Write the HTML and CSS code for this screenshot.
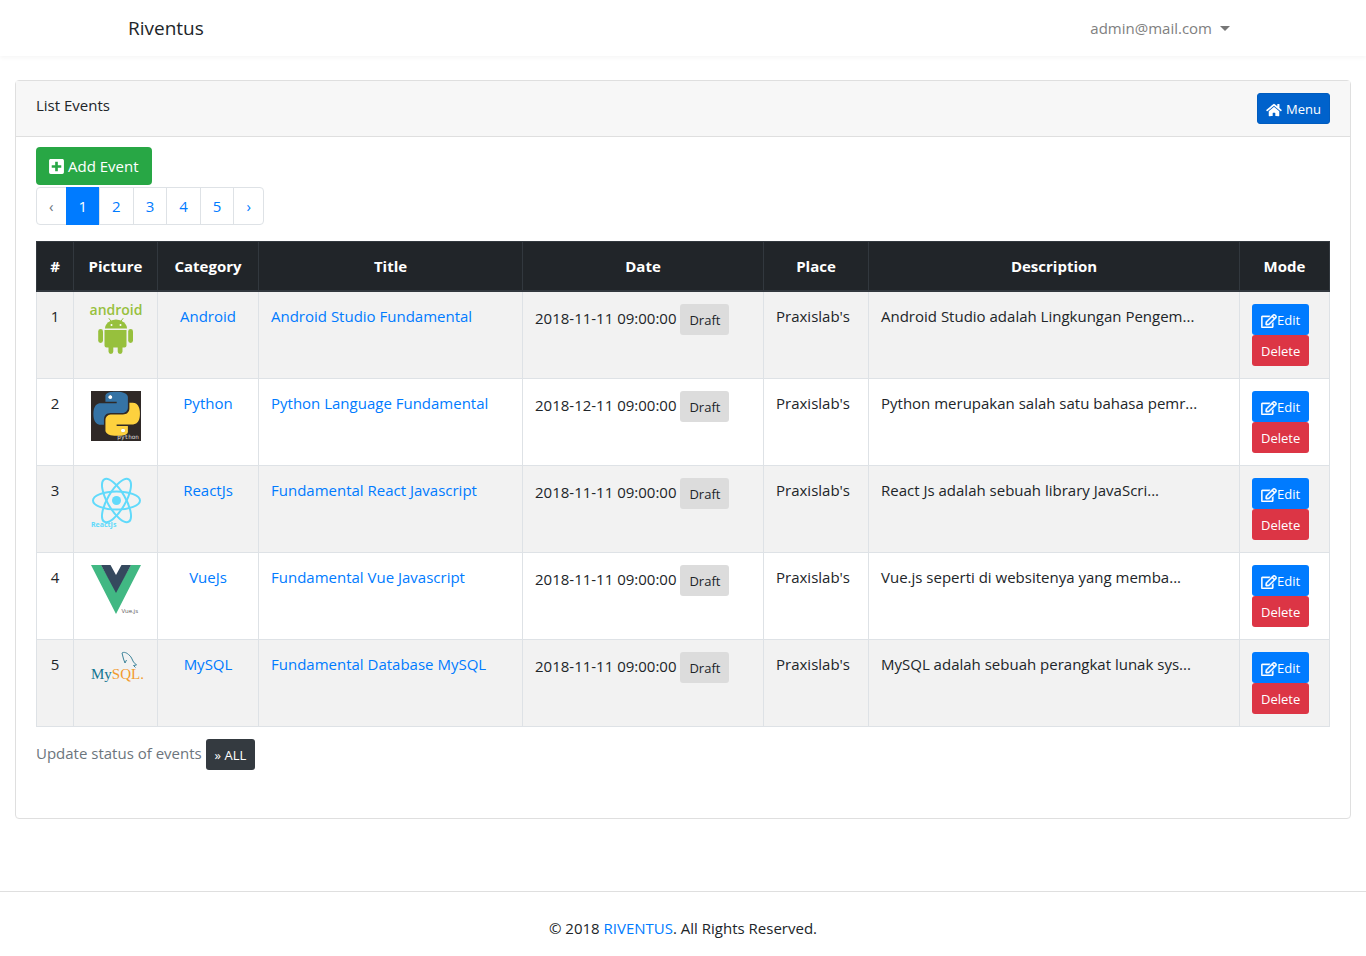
FILE: index.html
```html
<!DOCTYPE html>
<html lang="en">
<head>
<meta charset="utf-8">
<title>Riventus</title>
<link rel="stylesheet" href="styles.css">
</head>
<body>
<svg class="sprite" aria-hidden="true">
  <symbol id="home" viewBox="0 0 576 512"><path d="M280.37 148.26L96 300.11V464a16 16 0 0 0 16 16l112.06-.29a16 16 0 0 0 15.92-16V368a16 16 0 0 1 16-16h64a16 16 0 0 1 16 16v95.64a16 16 0 0 0 16 16.05L464 480a16 16 0 0 0 16-16V300L295.67 148.26a12.19 12.19 0 0 0-15.3 0zM571.6 251.47L488 182.56V44.05a12 12 0 0 0-12-12h-56a12 12 0 0 0-12 12v72.61L318.47 43a48 48 0 0 0-61 0L4.34 251.47a12 12 0 0 0-1.6 16.9l25.5 31A12 12 0 0 0 45.15 301l235.22-193.74a12.19 12.19 0 0 1 15.3 0L530.9 301a12 12 0 0 0 16.9-1.6l25.5-31a12 12 0 0 0-1.7-16.93z"/></symbol>
  <symbol id="plus" viewBox="0 0 448 512"><path d="M400 32H48C21.5 32 0 53.5 0 80v352c0 26.5 21.5 48 48 48h352c26.5 0 48-21.5 48-48V80c0-26.5-21.5-48-48-48zm-32 252c0 6.600-5.400 12-12 12h-92v92c0 6.600-5.400 12-12 12h-56c-6.600 0-12-5.400-12-12v-92H92c-6.600 0-12-5.400-12-12v-56c0-6.600 5.400-12 12-12h92v-92c0-6.600 5.400-12 12-12h56c6.600 0 12 5.400 12 12v92h92c6.600 0 12 5.400 12 12v56z"/></symbol>
  <symbol id="edit" viewBox="0 0 576 512"><path stroke="currentColor" stroke-width="14" d="M402.300 344.900l32-32c5-5 13.700-1.500 13.700 5.700V464c0 26.500-21.500 48-48 48H48c-26.500 0-48-21.500-48-48V112c0-26.500 21.500-48 48-48h273.500c7.100 0 10.700 8.600 5.700 13.700l-32 32c-1.500 1.500-3.500 2.300-5.700 2.300H48v352h352V350.500c0-2.100.8-4.100 2.300-5.600zm156.600-201.800L296.300 405.700l-90.400 10c-26.200 2.900-48.500-19.200-45.600-45.600l10-90.400L432.900 17.100c22.900-22.900 59.900-22.900 82.700 0l43.200 43.200c22.900 22.900 22.900 60 .1 82.800zM460.100 174L402 115.900 216.200 301.800l-7.300 65.300 65.300-7.300L460.100 174zm64.800-79.700l-43.200-43.200c-4.100-4.100-10.800-4.100-14.800 0L436 82l58.100 58.100 30.900-30.900c4-4.200 4-10.800-.1-14.900z"/></symbol>
</svg>

<nav class="navbar">
  <div class="container">
    <a class="brand" href="#">Riventus</a>
    <button class="account" type="button">admin@mail.com <span class="caret"></span></button>
  </div>
</nav>

<main class="main">
  <section class="card">
    <header class="card-header">
      <span>List Events</span>
      <a class="btn btn-sm btn-menu" href="#"><svg class="icon icon-wide"><use href="#home"/></svg> Menu</a>
    </header>
    <div class="card-body">
      <a class="btn btn-success" href="#"><svg class="icon"><use href="#plus"/></svg> Add Event</a>
      <ul class="pagination">
        <li><span class="page disabled">‹</span></li>
        <li><a class="page active" href="#">1</a></li>
        <li><a class="page" href="#">2</a></li>
        <li><a class="page" href="#">3</a></li>
        <li><a class="page" href="#">4</a></li>
        <li><a class="page" href="#">5</a></li>
        <li><a class="page" href="#">›</a></li>
      </ul>
      <table class="events">
        <colgroup>
          <col class="col-num"><col class="col-picture"><col class="col-category"><col class="col-title"><col class="col-date"><col class="col-place"><col><col class="col-mode">
        </colgroup>
        <thead>
          <tr><th>#</th><th>Picture</th><th>Category</th><th>Title</th><th>Date</th><th>Place</th><th>Description</th><th>Mode</th></tr>
        </thead>
        <tbody>
          <tr>
            <td class="center">1</td>
            <td class="center"><svg class="logo" viewBox="0 0 50 50" fill="#97c03d">
              <text class="logo-android" x="25" y="11" text-anchor="middle">android</text>
              <path d="M14 24.500a11 9 0 0 1 22 0z"/>
              <path d="M18 14.500l3 4M32 14.500l-3 4" stroke="#97c03d" stroke-linecap="round"/>
              <circle cx="20.500" cy="21" r="1" fill="#fff"/><circle cx="29.500" cy="21" r="1" fill="#fff"/>
              <path d="M13.500 26h22v15.500a2 2 0 0 1-2 2h-2v4a2.400 2.400 0 0 1-4.800 0v-4h-4.400v4a2.400 2.400 0 0 1-4.800 0v-4h-2a2 2 0 0 1-2-2z"/>
              <rect x="7.200" y="25" width="4.800" height="14" rx="2.400"/><rect x="37.200" y="25" width="4.800" height="14" rx="2.400"/>
            </svg></td>
            <td class="center"><a href="#">Android</a></td>
            <td><a href="#">Android Studio Fundamental</a></td>
            <td>2018-11-11 09:00:00 <button class="btn btn-sm btn-draft" type="button">Draft</button></td>
            <td>Praxislab's</td>
            <td>Android Studio adalah Lingkungan Pengem...</td>
            <td><div class="actions"><a class="btn btn-sm btn-primary" href="#"><svg class="icon icon-wide"><use href="#edit"/></svg>Edit</a><button class="btn btn-sm btn-danger" type="button">Delete</button></div></td>
          </tr>
          <tr>
            <td class="center">2</td>
            <td class="center"><svg class="logo" viewBox="0 0 50 50">
              <path fill="#2f2927" d="M0 0h50v50H0z"/>
              <g transform="translate(2.500 .7) scale(1.930 1.840)">
              <circle cx="8.700" cy="2.950" r="1.200" fill="#fff"/><circle cx="15.300" cy="21.100" r="1.200" fill="#fff"/>
              <path fill="#3573a5" d="M14.250.18l.9.2.73.26.59.3.45.32.34.34.25.34.16.33.1.3.04.26.02.2-.01.13V8.500l-.05.63-.13.55-.21.46-.26.38-.3.31-.33.25-.35.19-.35.14-.33.1-.3.07-.26.04-.21.02H8.770l-.69.05-.59.14-.5.22-.41.27-.33.32-.27.35-.2.36-.15.37-.1.35-.07.32-.04.27-.02.21v3.060H3.170l-.21-.03-.28-.07-.32-.12-.35-.18-.36-.26-.36-.36-.35-.46-.32-.59-.28-.73-.21-.88-.14-1.050-.05-1.230.06-1.220.16-1.040.24-.87.32-.71.36-.57.4-.44.42-.33.42-.24.4-.16.36-.1.32-.05.24-.01h.16l.06.01h8.160v-.83H6.180l-.01-2.750-.02-.37.05-.34.11-.31.17-.28.25-.26.31-.23.38-.2.44-.18.51-.15.58-.12.64-.1.71-.06.77-.04.84-.02 1.270.05zm-6.300 1.980l-.23.33-.08.41.08.41.23.34.33.22.41.09.41-.09.33-.22.23-.34.08-.41-.08-.41-.23-.33-.33-.22-.41-.09-.41.09z"/>
              <path fill="#fdd13e" d="M21.040 6.110l.28.06.32.12.35.18.36.27.36.35.35.47.32.59.28.73.21.88.14 1.040.05 1.230-.06 1.230-.16 1.040-.24.86-.32.71-.36.57-.4.45-.42.33-.42.24-.4.16-.36.09-.32.05-.24.02-.16-.01h-8.220v.82h5.840l.01 2.760.02.36-.05.34-.11.31-.17.29-.25.25-.31.24-.38.2-.44.17-.51.15-.58.13-.64.09-.71.07-.77.04-.84.01-1.270-.04-1.070-.14-.9-.2-.73-.25-.59-.3-.45-.33-.34-.34-.25-.34-.16-.33-.1-.3-.04-.25-.02-.2.01-.13v-5.340l.05-.64.13-.54.21-.46.26-.38.3-.32.33-.24.35-.2.35-.14.33-.1.3-.06.26-.04.21-.02.13-.01h5.840l.69-.05.59-.14.5-.21.41-.28.33-.32.27-.35.2-.36.15-.36.1-.35.07-.32.04-.28.02-.21V6.070h2.090l.14.01zm-6.470 14.250l-.23.33-.08.41.08.41.23.33.33.23.41.08.41-.08.33-.23.23-.33.08-.41-.08-.41-.23-.33-.33-.23-.41-.08-.41.08z"/>
              </g>
              <text class="logo-python" x="48" y="48" text-anchor="end">python</text>
            </svg></td>
            <td class="center"><a href="#">Python</a></td>
            <td><a href="#">Python Language Fundamental</a></td>
            <td>2018-12-11 09:00:00 <button class="btn btn-sm btn-draft" type="button">Draft</button></td>
            <td>Praxislab's</td>
            <td>Python merupakan salah satu bahasa pemr...</td>
            <td><div class="actions"><a class="btn btn-sm btn-primary" href="#"><svg class="icon icon-wide"><use href="#edit"/></svg>Edit</a><button class="btn btn-sm btn-danger" type="button">Delete</button></div></td>
          </tr>
          <tr>
            <td class="center">3</td>
            <td class="center"><svg class="logo" viewBox="0 0 50 50">
              <g fill="none" stroke="#61dafb" stroke-width="2">
                <ellipse cx="25.500" cy="22.500" rx="23.500" ry="9"/>
                <ellipse cx="25.500" cy="22.500" rx="24.500" ry="9" transform="rotate(60 25.500 22.500)"/>
                <ellipse cx="25.500" cy="22.500" rx="24.500" ry="9" transform="rotate(120 25.500 22.500)"/>
              </g>
              <circle cx="25.500" cy="22.500" r="4.500" fill="#61dafb"/>
              <text class="logo-react" x="0" y="49">ReactJs</text>
            </svg></td>
            <td class="center"><a href="#">ReactJs</a></td>
            <td><a href="#">Fundamental React Javascript</a></td>
            <td>2018-11-11 09:00:00 <button class="btn btn-sm btn-draft" type="button">Draft</button></td>
            <td>Praxislab's</td>
            <td>React Js adalah sebuah library JavaScri...</td>
            <td><div class="actions"><a class="btn btn-sm btn-primary" href="#"><svg class="icon icon-wide"><use href="#edit"/></svg>Edit</a><button class="btn btn-sm btn-danger" type="button">Delete</button></div></td>
          </tr>
          <tr>
            <td class="center">4</td>
            <td class="center"><svg class="logo" viewBox="0 0 50 50">
              <path fill="#41b883" d="M0 0h10l15 26L40 0h10L25 49z"/>
              <path fill="#35495e" d="M10 0h9.500L25 10l5.500-10H40L25 28z"/>
              <text class="logo-vue" x="47" y="48" text-anchor="end">Vue.js</text>
            </svg></td>
            <td class="center"><a href="#">VueJs</a></td>
            <td><a href="#">Fundamental Vue Javascript</a></td>
            <td>2018-11-11 09:00:00 <button class="btn btn-sm btn-draft" type="button">Draft</button></td>
            <td>Praxislab's</td>
            <td>Vue.js seperti di websitenya yang memba...</td>
            <td><div class="actions"><a class="btn btn-sm btn-primary" href="#"><svg class="icon icon-wide"><use href="#edit"/></svg>Edit</a><button class="btn btn-sm btn-danger" type="button">Delete</button></div></td>
          </tr>
          <tr>
            <td class="center">5</td>
            <td class="center"><svg class="logo" viewBox="0 0 50 50">
              <path fill="none" stroke="#3b8299" stroke-linejoin="round" d="M34 11l-1.500-4-1.500-6c2-1.500 5 0 6.500 1.500 3 2 3.500 5 5 7.500l3 3-3 .5 2 2M34 11l1.500-3"/>
              <text class="logo-mysql" x="0" y="27"><tspan fill="#127591">My</tspan><tspan fill="#f29a2e">SQL.</tspan></text>
            </svg></td>
            <td class="center"><a href="#">MySQL</a></td>
            <td><a href="#">Fundamental Database MySQL</a></td>
            <td>2018-11-11 09:00:00 <button class="btn btn-sm btn-draft" type="button">Draft</button></td>
            <td>Praxislab's</td>
            <td>MySQL adalah sebuah perangkat lunak sys...</td>
            <td><div class="actions"><a class="btn btn-sm btn-primary" href="#"><svg class="icon icon-wide"><use href="#edit"/></svg>Edit</a><button class="btn btn-sm btn-danger" type="button">Delete</button></div></td>
          </tr>
        </tbody>
      </table>
      <div class="status">Update status of events <button class="btn btn-sm btn-dark" type="button">» ALL</button></div>
    </div>
  </section>
</main>

<footer class="footer">© 2018 <a href="#">RIVENTUS</a>. All Rights Reserved.</footer>
</body>
</html>
```
FILE: styles.css
```css
* { box-sizing: border-box; }
body {
  margin: 0;
  background: #fff;
  color: #212529;
  font: 15px/24px "Open Sans", "Noto Sans", sans-serif;
}
a { color: #007bff; text-decoration: none; }
button { font-family: inherit; cursor: pointer; }
.sprite { display: none; }

.navbar { box-shadow: 0 2px 4px rgba(0, 0, 0, .04); }
.container {
  display: flex;
  justify-content: space-between;
  align-items: center;
  max-width: 1140px;
  height: 56px;
  margin: 0 auto;
  padding: 0 15px;
}
.brand { color: #212529; font-size: 19px; line-height: 30px; }
.account {
  display: flex;
  align-items: center;
  gap: 8px;
  padding: 8px;
  border: 0;
  background: none;
  color: #808080;
  font-size: 15px;
  line-height: 24px;
}
.caret {
  border: 5px solid transparent;
  border-top-color: #777;
  border-bottom: 0;
}

.main { padding: 24px 15px 72px; }
.card { border: 1px solid #dfdfdf; border-radius: 4px; }
.card-header {
  display: flex;
  justify-content: space-between;
  align-items: flex-start;
  padding: 12px 20px;
  border-bottom: 1px solid #dfdfdf;
  background: #f7f7f7;
}
.card-body { padding: 10px 20px 48px; }

.btn {
  display: inline-flex;
  align-items: center;
  gap: 4px;
  padding: 6px 12px;
  border: 1px solid transparent;
  border-radius: 4px;
  color: #fff;
  font-size: 15px;
  line-height: 24px;
  vertical-align: middle;
}
.btn-sm { padding: 5px 8px 3px; border-radius: 3px; font-size: 13px; line-height: 21px; }
.btn-menu { background: #0062cc; border-color: #005cbf; }
.btn-success { background: #28a745; }
.btn-primary { gap: 0; background: #007bff; }
.btn-danger { background: #dc3545; }
.btn-dark { background: #343a40; }
.btn-draft { background: #dcdcdc; color: #212529; }
.icon { width: 15px; height: 17px; fill: currentColor; overflow: visible; }
.icon-wide { width: 16px; height: 14px; }

.pagination { display: flex; margin: 2px 0 16px; padding: 0 0 0 1px; list-style: none; }
.page {
  display: block;
  margin-left: -1px;
  padding: 6px 12px;
  border: 1px solid #dee2e6;
  line-height: 24px;
}
.page.disabled { color: #6c757d; }
.page.active { background: #007bff; border-color: #007bff; color: #fff; }
.pagination li:first-child .page { border-radius: 4px 0 0 4px; }
.pagination li:last-child .page { border-radius: 0 4px 4px 0; }

.events { width: 100%; table-layout: fixed; border-collapse: collapse; }
.events th, .events td { padding: 12px; border: 1px solid #dee2e6; }
.events th {
  padding: 12px 0;
  border-color: #32383e;
  border-bottom-width: 2px;
  background: #212529;
  color: #fff;
  font-weight: 700;
}
.events td { height: 87px; vertical-align: top; }
.events tbody tr:nth-child(odd) { background: #f2f2f2; }
.events .center { padding: 12px 0; text-align: center; }
.col-num { width: 37px; }
.col-picture { width: 84px; }
.col-category { width: 101px; }
.col-title { width: 264px; }
.col-date { width: 241px; }
.col-place { width: 105px; }
.col-mode { width: 90px; }
.actions { display: flex; flex-direction: column; align-items: flex-start; }
.logo { display: block; width: 50px; height: 50px; margin: 0 auto; overflow: visible; }
.logo-android { font: 600 14px "Open Sans", sans-serif; }
.logo-python { fill: #ddd; font: 6px "DejaVu Sans Mono", monospace; }
.logo-react { fill: #61dafb; font: 700 7px "Open Sans", sans-serif; }
.logo-vue { fill: #555; font: 6px "Open Sans", sans-serif; }
.logo-mysql { font: 15px "Liberation Serif", serif; }

.status { margin-top: 12px; color: #6c757d; }

.footer { padding: 24px 15px 28px; border-top: 1px solid #dfdfdf; text-align: center; }
```
